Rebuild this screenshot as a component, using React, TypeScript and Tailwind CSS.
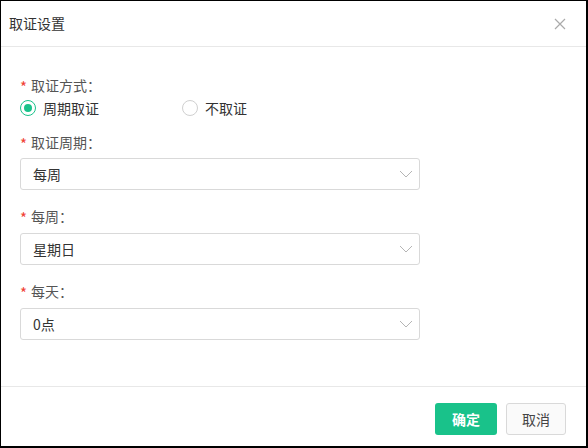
import { useState } from 'react'

const FONT = { fontFamily: '"Noto Sans CJK SC", "Noto Sans", sans-serif' }

function Chevron() {
  return (
    <svg width="14" height="8" viewBox="0 0 14 8" fill="none" className="text-[#b5b5b5]">
      <path d="M1 1l6 6 6-6" stroke="currentColor" strokeWidth="1" />
    </svg>
  )
}

function Label({ text }: { text: string }) {
  return (
    <div className="flex items-center h-[20px] text-[14px] text-[#555]">
      <span className="text-[#f04134] w-[11px] text-[15px] leading-none pt-[3px]">*</span>
      <span>{text}：</span>
    </div>
  )
}

function Select({ value }: { value: string }) {
  return (
    <div className="w-[400px] h-[32px] border border-[#d9d9d9] rounded-[3px] flex items-center justify-between pl-[12px] pr-[6px] text-[14px] text-[#333]">
      <span>{value}</span>
      <Chevron />
    </div>
  )
}

function Radio({ checked, label, onClick }: { checked: boolean; label: string; onClick: () => void }) {
  return (
    <button onClick={onClick} className="flex items-center gap-[7px] text-[14px] text-[#333]">
      <span
        className={`w-[16px] h-[16px] rounded-full border flex items-center justify-center ${
          checked ? 'border-[#19c28a]' : 'border-[#d0d0d0]'
        }`}
      >
        {checked && <span className="w-[8px] h-[8px] rounded-full bg-[#19c28a]" />}
      </span>
      <span>{label}</span>
    </button>
  )
}

export default function App() {
  const [mode, setMode] = useState('period')

  return (
    <div style={FONT} className="w-[588px] h-[448px] bg-white border-l border-t border-r-2 border-b-2 border-black flex flex-col">
      {/* Header */}
      <div className="h-[46px] flex items-center justify-between pl-[8px] pr-[20px] border-b border-[#e8e8e8]">
        <span className="text-[14px] text-[#333]">取证设置</span>
        <svg width="12" height="12" viewBox="0 0 12 12" className="text-[#aaa]">
          <path d="M1 1l10 10M11 1L1 11" stroke="currentColor" strokeWidth="1.2" />
        </svg>
      </div>

      {/* Body */}
      <div className="flex-1 pl-[19px] pt-[28px]">
        <Label text="取证方式" />
        <div className="flex items-center h-[24px] mt-[1px]">
          <div className="w-[162px]">
            <Radio checked={mode === 'period'} label="周期取证" onClick={() => setMode('period')} />
          </div>
          <Radio checked={mode === 'none'} label="不取证" onClick={() => setMode('none')} />
        </div>

        <div className="mt-[12px]">
          <Label text="取证周期" />
          <div className="mt-[6px]">
            <Select value="每周" />
          </div>
        </div>

        <div className="mt-[16px]">
          <Label text="每周" />
          <div className="mt-[7px]">
            <Select value="星期日" />
          </div>
        </div>

        <div className="mt-[16px]">
          <Label text="每天" />
          <div className="mt-[7px]">
            <Select value="0点" />
          </div>
        </div>
      </div>

      {/* Footer */}
      <div className="h-[60px] border-t border-[#e8e8e8] flex items-start justify-end gap-[9px] pr-[20px] pt-[16px]">
        <button className="w-[62px] h-[32px] rounded-[3px] bg-[#19c28a] text-white text-[14px] font-bold">确定</button>
        <button className="w-[60px] h-[32px] rounded-[3px] bg-[#fafafa] border border-[#d9d9d9] text-[#444] text-[14px]">取消</button>
      </div>
    </div>
  )
}
